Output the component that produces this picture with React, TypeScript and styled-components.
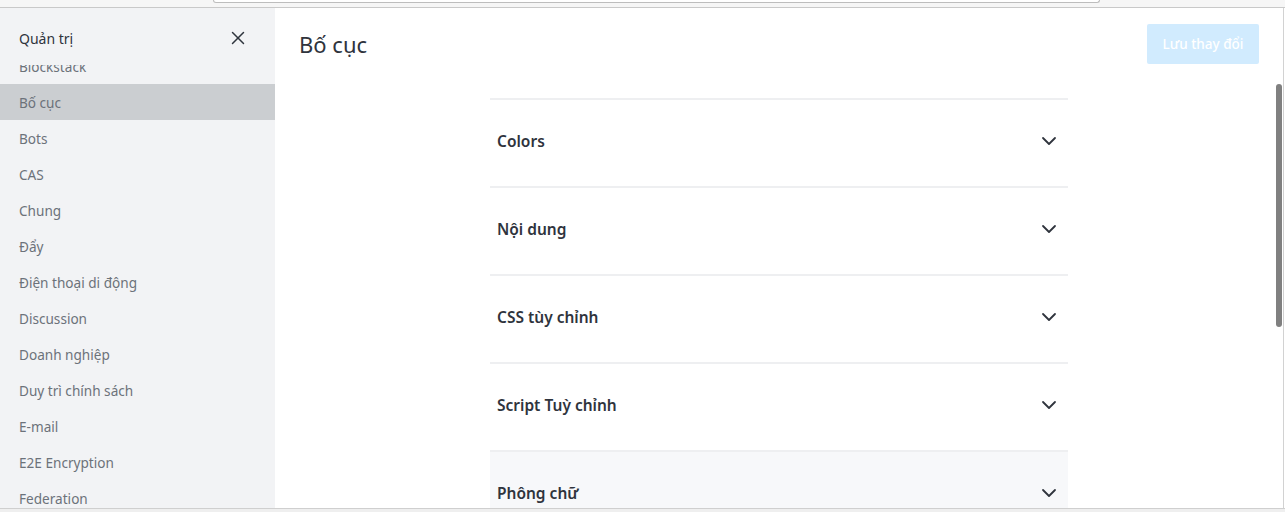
import React from "react";
import styled, { createGlobalStyle } from "styled-components";
import { X, ChevronDown } from "lucide-react";

const Global = createGlobalStyle`
  html, body { margin: 0; padding: 0; background: #fff; }
  body { font-family: "Noto Sans", "Open Sans", sans-serif; overflow: hidden; }
  * { box-sizing: border-box; }
`;

const Frame = styled.div`
  width: 1285px;
  height: 512px;
  display: flex;
  flex-direction: column;
  overflow: hidden;
`;

const TopChrome = styled.div`
  height: 8px;
  flex: none;
  background: #f6f6f6;
  border-bottom: 1px solid #c9c9c9;
  display: flex;
`;

const UrlBar = styled.div`
  margin-left: 213px;
  width: 887px;
  height: 3px;
  background: #ffffff;
  border: 1px solid #bdbdbd;
  border-top: none;
  border-radius: 0 0 4px 4px;
`;

const Middle = styled.div`
  flex: 1;
  display: flex;
  min-height: 0;
  border-right: 1px solid #d2d2d2;
  margin-right: 1px;
`;

const Sidebar = styled.aside`
  width: 275px;
  flex: none;
  background: #f2f3f5;
  display: flex;
  flex-direction: column;
`;

const SideHeader = styled.div`
  height: 57px;
  flex: none;
  display: flex;
  align-items: center;
  justify-content: space-between;
  padding: 3px 26px 0 19px;
  font-size: 14px;
  color: #2f343d;
`;

const CloseButton = styled.span`
  display: flex;
  color: #2f343d;
`;

const NavViewport = styled.div`
  flex: 1;
  overflow: hidden;
  min-height: 0;
`;

const NavList = styled.ul`
  list-style: none;
  margin: -17px 0 0;
  padding: 0;
`;

const NavItem = styled.li<{ $active?: boolean }>`
  height: 36px;
  display: flex;
  align-items: center;
  padding-left: 19px;
  font-size: 13.6px;
  color: #6c727a;
  background: ${(p) => (p.$active ? "#cbced1" : "transparent")};
`;

const Main = styled.main`
  flex: 1;
  display: flex;
  flex-direction: column;
  background: #ffffff;
  min-width: 0;
`;

const MainHeader = styled.header`
  height: 72px;
  flex: none;
  display: flex;
  align-items: center;
  justify-content: space-between;
  padding: 0 24px;
`;

const Title = styled.h1`
  margin: 0;
  font-size: 22px;
  font-weight: 400;
  color: #2f343d;
`;

const SaveButton = styled.button`
  height: 40px;
  width: 112px;
  border: none;
  border-radius: 2px;
  background: #d1ebfe;
  color: #ffffff;
  font-family: inherit;
  font-size: 13.5px;
  font-weight: 500;
  padding: 0;
`;

const Content = styled.div`
  position: relative;
  flex: 1;
  overflow: hidden;
  padding-top: 18px;
`;

const Accordion = styled.div`
  width: 578px;
  margin: 0 auto;
`;

const Row = styled.div<{ $hover?: boolean }>`
  height: 88px;
  border-top: 2px solid #eeeff1;
  display: flex;
  align-items: center;
  justify-content: space-between;
  padding: 0 7px 4px;
  background: ${(p) => (p.$hover ? "#f7f8fa" : "transparent")};
`;

const RowTitle = styled.span`
  font-size: 15.5px;
  font-weight: 600;
  color: #2f343d;
`;

const Chevron = styled.span`
  display: flex;
  color: #2f343d;
`;

const Thumb = styled.div`
  position: absolute;
  right: 1px;
  top: 4px;
  width: 6px;
  height: 243px;
  border-radius: 3px;
  background: #808080;
`;

const BottomChrome = styled.div`
  height: 4px;
  flex: none;
  background: #efefef;
  border-top: 1px solid #cfcfcf;
`;

const navItems = [
  "Blockstack",
  "Bố cục",
  "Bots",
  "CAS",
  "Chung",
  "Đẩy",
  "Điện thoại di động",
  "Discussion",
  "Doanh nghiệp",
  "Duy trì chính sách",
  "E-mail",
  "E2E Encryption",
  "Federation",
  "File Upload",
];

const sections = ["Colors", "Nội dung", "CSS tùy chỉnh", "Script Tuỳ chỉnh", "Phông chữ", "Đăng nhập"];

export default function App() {
  return (
    <Frame>
      <Global />
      <TopChrome>
        <UrlBar />
      </TopChrome>
      <Middle>
        <Sidebar>
          <SideHeader>
            <span>Quản trị</span>
            <CloseButton>
              <X size={22} strokeWidth={1.6} />
            </CloseButton>
          </SideHeader>
          <NavViewport>
            <NavList>
              {navItems.map((n) => (
                <NavItem key={n} $active={n === "Bố cục"}>
                  {n}
                </NavItem>
              ))}
            </NavList>
          </NavViewport>
        </Sidebar>
        <Main>
          <MainHeader>
            <Title>Bố cục</Title>
            <SaveButton>Lưu thay đổi</SaveButton>
          </MainHeader>
          <Content>
            <Accordion>
              {sections.map((s) => (
                <Row key={s} $hover={s === "Phông chữ"}>
                  <RowTitle>{s}</RowTitle>
                  <Chevron>
                    <ChevronDown size={24} strokeWidth={1.8} />
                  </Chevron>
                </Row>
              ))}
            </Accordion>
            <Thumb />
          </Content>
        </Main>
      </Middle>
      <BottomChrome />
    </Frame>
  );
}
